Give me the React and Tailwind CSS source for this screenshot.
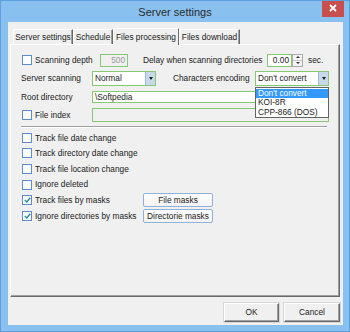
function Check({ checked }) {
  return (
    <span className="w-[10px] h-[10px] border border-[#5b8ed0] bg-white flex items-center justify-center shrink-0">
      {checked && (
        <svg width="7" height="6" viewBox="0 0 7 6">
          <path d="M0.8 3 L2.8 5 L6.2 0.8" stroke="#2a8fa8" strokeWidth="1.4" fill="none" />
        </svg>
      )}
    </span>
  )
}

function Arrow() {
  return (
    <span className="w-[10px] self-stretch bg-[#c8d9ec] border-l border-[#9cb9dc] flex items-center justify-center shrink-0">
      <span className="border-x-[2.5px] border-x-transparent border-t-[3px] border-t-[#202020]" />
    </span>
  )
}

function Tab({ label, w, active }) {
  if (active) {
    return (
      <div className={`${w} h-[17px] -mb-[1px] relative z-10 bg-[#f0f0f0] border-t border-l border-white border-r border-r-[#696969] flex items-center justify-center`}>
        {label}
      </div>
    )
  }
  return (
    <div className={`${w} h-[15px] bg-[#f0f0f0] border-t border-l border-white border-r border-r-[#696969] shadow-[inset_-1px_0_0_#a0a0a0] flex items-center justify-center`}>
      {label}
    </div>
  )
}

function CheckRow({ label, checked, children, labelW = "" }) {
  return (
    <div className="h-[15.6px] flex items-center pl-[11px]">
      <Check checked={checked} />
      <span className={`ml-[3px] ${labelW}`}>{label}</span>
      {children}
    </div>
  )
}

function MaskButton({ label }) {
  return (
    <div className="w-[70px] h-[14px] rounded-[2px] border border-[#8fb0d8] bg-gradient-to-b from-white to-[#f3f3f3] flex items-center justify-center">
      {label}
    </div>
  )
}

function DialogButton({ label, w }) {
  return (
    <div className={`${w} h-[19px] bg-[#f0f0f0] border border-t-white border-l-white border-r-[#696969] border-b-[#696969] shadow-[inset_-1px_-1px_0_#a0a0a0,0_0_0_1px_#d8d8d8] flex items-center justify-center`}>
      {label}
    </div>
  )
}

export default function App() {
  return (
    <div className="w-[350px] h-[332px] bg-[#88c0f0] border border-[#5d9fdd] flex flex-col font-['Liberation_Sans',Arial,sans-serif] text-[8.3px] leading-none text-[#1a1a1a] overflow-hidden">
      <div className="h-[21px] relative flex items-center justify-center shrink-0">
        <span className="text-[11px] text-[#2a2a2a] mt-[1px]">Server settings</span>
        <svg className="absolute right-[5px] -top-[1px]" width="22" height="17" viewBox="0 0 22 17">
          <rect width="22" height="17" fill="#c94f4f" />
          <path d="M8 5 L14 11 M14 5 L8 11" stroke="white" strokeWidth="1.8" />
        </svg>
      </div>

      <div className="ml-[7px] mr-[6px] mb-[6px] flex-1 bg-[#f0f0f0] flex flex-col pt-[5px]">
        <div className="flex items-end h-[17px] pl-[5px]">
          <Tab label="Server settings" w="w-[60px]" />
          <Tab label="Schedule" w="w-[40px]" />
          <Tab label="Files processing" w="w-[66px]" active />
          <Tab label="Files download" w="w-[61px]" />
        </div>

        <div className="ml-[2px] w-[330px] h-[253px] relative border-t border-l border-white border-r border-b border-r-[#696969] border-b-[#696969] shadow-[inset_-1px_-1px_0_#a0a0a0] flex flex-col">
          {/* row 1 */}
          <div className="mt-[8px] h-[14px] flex items-center pl-[11px]">
            <Check />
            <span className="ml-[3px] w-[65px]">Scanning depth</span>
            <div className="w-[28px] h-[13px] border border-[#86c873] bg-[#f0f0f0] flex items-center justify-end pr-[2px] text-[#9a9a9a]">500</div>
            <span className="ml-[15px] w-[124px]">Delay when scanning directories</span>
            <div className="w-[25px] h-[13px] border border-[#86c873] bg-white flex items-center justify-end pr-[2px]">0.00</div>
            <div className="w-[11px] h-[13px] flex flex-col border border-[#acacac] bg-[#f4f4f4]">
              <span className="flex-1 flex items-center justify-center border-b border-[#c8c8c8]">
                <span className="border-x-[2px] border-x-transparent border-b-[2px] border-b-[#333]" />
              </span>
              <span className="flex-1 flex items-center justify-center">
                <span className="border-x-[2px] border-x-transparent border-t-[2px] border-t-[#333]" />
              </span>
            </div>
            <span className="ml-[5px]">sec.</span>
          </div>

          {/* row 2 */}
          <div className="mt-[4px] h-[15px] flex items-center pl-[10px]">
            <span className="w-[71px]">Server scanning</span>
            <div className="w-[64px] h-[15px] border border-[#86c873] bg-white flex items-center">
              <span className="flex-1 pl-[2px]">Normal</span>
              <Arrow />
            </div>
            <span className="ml-[17px] w-[82px]">Characters encoding</span>
            <div className="w-[74px] h-[15px] border border-[#86c873] bg-white flex items-center">
              <span className="flex-1 pl-[2px]">Don't convert</span>
              <Arrow />
            </div>
          </div>

          {/* row 3 */}
          <div className="mt-[5px] h-[12px] flex items-center pl-[10px]">
            <span className="w-[71px]">Root directory</span>
            <div className="w-[237px] h-[12px] border border-[#86c873] bg-white flex items-center pl-[2px]">\Softpedia</div>
          </div>

          {/* row 4 */}
          <div className="mt-[5px] h-[14px] flex items-center pl-[11px]">
            <Check />
            <span className="ml-[3px] w-[57px]">File index</span>
            <div className="w-[237px] h-[14px] border border-[#86c873] bg-[#f0f0f0]" />
          </div>

          <div className="mt-[4px] ml-[10px] w-[306px] h-[2px] border-t border-[#a0a0a0] border-b border-b-white" />

          <div className="mt-[2px] flex flex-col">
            <CheckRow label="Track file date change" />
            <CheckRow label="Track directory date change" />
            <CheckRow label="Track file location change" />
            <CheckRow label="Ignore deleted" />
            <CheckRow label="Track files by masks" checked labelW="w-[108px]">
              <MaskButton label="File masks" />
            </CheckRow>
            <CheckRow label="Ignore directories by masks" checked labelW="w-[108px]">
              <MaskButton label="Directorie masks" />
            </CheckRow>
          </div>

          {/* open dropdown list */}
          <div className="absolute left-[244px] top-[42px] w-[74px] h-[31px] border border-[#646464] bg-white flex flex-col py-[0.5px]">
            <span className="h-[10px] bg-[#3399ff] text-white flex items-center pl-[2px]">Don't convert</span>
            <span className="h-[10px] flex items-center pl-[2px]">KOI-8R</span>
            <span className="h-[10px] flex items-center pl-[2px]">CPP-866 (DOS)</span>
          </div>
        </div>

        <div className="mt-[6px] flex justify-end gap-[5px] pr-[3px]">
          <DialogButton label="OK" w="w-[55px]" />
          <DialogButton label="Cancel" w="w-[56px]" />
        </div>
      </div>
    </div>
  )
}
